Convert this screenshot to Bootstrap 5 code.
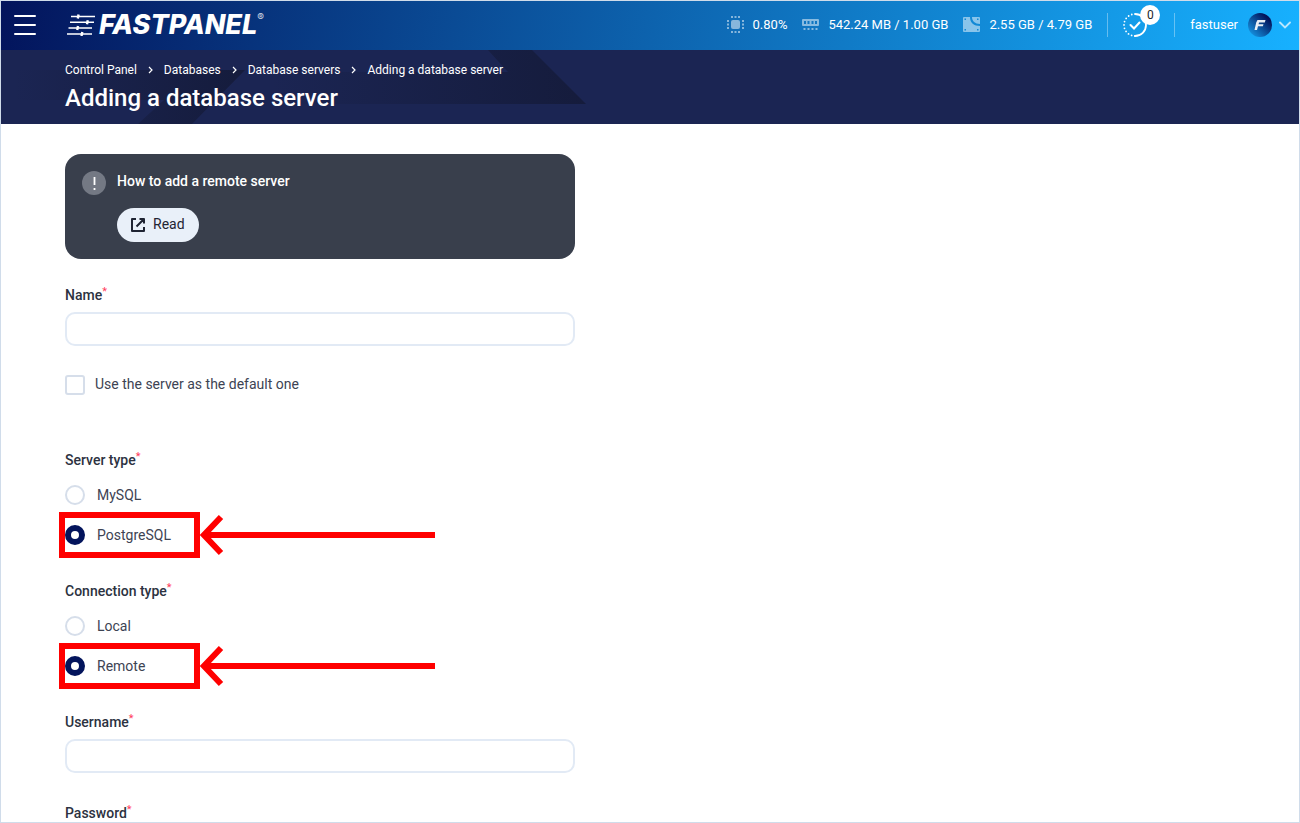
<!DOCTYPE html>
<html lang="en">
<head>
<meta charset="utf-8">
<meta name="viewport" content="width=device-width, initial-scale=1">
<title>Adding a database server</title>
<link href="https://cdn.jsdelivr.net/npm/bootstrap@5.3.0/dist/css/bootstrap.min.css" rel="stylesheet">
<style>
  body { font-family: Roboto, "Liberation Sans", sans-serif; font-size: 14px; line-height: 20px; color: #2c3241; }
  .app-frame { border: 1px solid #d0dcea; }
  .topbar { height: 49px; background: linear-gradient(100deg, #03145c 0%, #17b1ff 100%); font-size: 13px; padding: 0 8px 2px 13px; }
  .menu-btn, .plain-btn { background: none; border: 0; padding: 0; line-height: 0; }
  .brand { font-family: Inter, Roboto, sans-serif; font-size: 27px; line-height: 28px; font-weight: 800; font-style: italic; margin-left: 31px; }
  .brand sup { font-size: 10px; font-weight: 400; font-style: normal; line-height: 12px; top: 0; opacity: .8; }
  .stats { gap: 15px; }
  .stats svg { margin-right: 9px; }
  .sep { width: 1px; height: 24px; background: rgba(255,255,255,.35); margin: 0 15px; }
  .task-btn { margin-right: 12px; }
  .user-btn { gap: 10px; }
  .user-icons { gap: 7px; }
  .task-count { left: 17px; top: -8px; width: 20px; height: 20px; font-size: 12px; line-height: 20px; }
  .page-head { min-height: 74px; background: #1b2553; padding: 10px 64px 8px; }
  .page-head .art { inset: 0 auto auto 0; }
  .page-head .crumbs { font-size: 12px; gap: 10px; }
  .page-head h1 { font-size: 24px; line-height: 28px; font-weight: 500; margin: 4px 0 0; }
  .page-body { padding: 30px 64px; scrollbar-width: none; }
  .form-col { max-width: 510px; }
  .hint { background: #393f4c; border-radius: 16px; padding: 17px; gap: 11px; margin-bottom: 26px; }
  .hint-title { font-weight: 500; margin-bottom: 17px; }
  .read-btn { background: #e9f0f9; border-radius: 17px; height: 34px; padding: 0 14px; gap: 8px; color: #1f2433; font-size: 14px; }
  .read-btn span, .default-row label { padding-bottom: 2px; }
  .field-label { font-weight: 500; display: block; margin: 0 0 7px; font-size: 14px; line-height: 20px; }
  .req { color: #ff3b5c; font-size: 11px; font-weight: 400; line-height: 10px; vertical-align: 5px; }
  .form-control { height: 34px; border: 2px solid #e2eaf5; border-radius: 10px; }
  .field { margin-bottom: 30px; }
  .choice { gap: 10px; height: 20px; color: #3d4353; }
  .choice .form-check-input { width: 20px; height: 20px; margin: 0; border: 2px solid #d6deea; }
  .choice .form-check-input[type=checkbox] { border-radius: 3px; }
  .choice .form-check-input[type=radio]:checked { background: #fff none; border: 6px solid #03145c; }
  .choices { margin-bottom: 36px; }
  .choices .field-label { margin-bottom: 15px; }
  .choices .choice { gap: 12px; margin-bottom: 20px; }
  .default-row { margin: 29px 0 55px; }
  .mark-box { left: -6px; top: -13px; width: 141px; height: 46px; border: 6px solid #f00; pointer-events: none; }
  .mark-arrow { left: 135px; top: -11px; pointer-events: none; }
</style>
</head>
<body>
<div class="app-frame vh-100 d-flex flex-column overflow-hidden">
  <header class="topbar d-flex align-items-center text-white flex-shrink-0">
    <button class="menu-btn" type="button" aria-label="Menu">
      <svg width="22" height="20" viewBox="0 0 22 20" stroke="#fff" stroke-width="2" stroke-linecap="round"><path d="M1 1H21M1 10H21M1 19H21"/></svg>
    </button>
    <a href="#" class="brand d-flex align-items-center text-white text-decoration-none">
      <svg class="me-1" width="28" height="22" viewBox="0 0 28 22" stroke="#fff" stroke-width="1.6"><path d="M4 2.5H9M13 2.5H28M3 8.300H18M23 8.300H27M1.500 14H8M13 14H25M0 20H12M17 20H25"/><path d="M9 2.500H13M18 8.300H23M8 14H13M12 20H17"/><path stroke-width="2.400" d="M11.600 0.500L10.800 4.500M20.800 6.300L20 10.300M11 12L10.200 16M15.300 18L14.500 22"/></svg>
      <span>FASTPANEL</span><sup class="align-self-start">®</sup>
    </a>
    <div class="stats d-flex align-items-center ms-auto">
      <span class="d-flex align-items-center"><svg width="17" height="17" viewBox="0 0 17 17" fill="#fff" fill-opacity=".5"><rect x="4" y="4" width="9" height="9" rx="2"/><path d="M4 0h2v2H4zM7.500 0h2v2h-2zM11 0h2v2h-2zM4 15h2v2H4zM7.500 15h2v2h-2zM11 15h2v2h-2zM0 4h2v2H0zM0 7.500h2v2H0zM0 11h2v2H0zM15 4h2v2h-2zM15 7.500h2v2h-2zM15 11h2v2h-2z"/></svg>0.80%</span>
      <span class="d-flex align-items-center"><svg width="17" height="12" viewBox="0 0 17 12" fill="#fff" fill-opacity=".5"><path fill-rule="evenodd" d="M1 0H16Q17 0 17 1V6Q17 7 16 7H1Q0 7 0 6V1Q0 0 1 0ZM2 2V5H4V2ZM5.500 2V5H7.500V2ZM9.500 2V5H11.500V2ZM13 2V5H15V2Z"/><path d="M1.500 9h2v2h-2zM5.500 9h2v2h-2zM9.500 9h2v2h-2zM13.500 9h2v2h-2z"/></svg>542.24 MB / 1.00 GB</span>
      <span class="d-flex align-items-center"><svg width="17" height="15" viewBox="0 0 17 15" fill="#fff" fill-opacity=".5"><path fill-rule="evenodd" d="M1 0H7C7 6 11 9 17 9V14Q17 15 16 15H1Q0 15 0 14V1Q0 0 1 0ZM1.500 1.500V3H3V1.500ZM1.500 12V13.500H3V12ZM14 12V13.500H15.500V12Z"/><path fill-rule="evenodd" d="M9 0H16Q17 0 17 1V7C12 7 9 4 9 0ZM14 1.500V3H15.500V1.500Z"/></svg>2.55 GB / 4.79 GB</span>
    </div>
    <div class="sep"></div>
    <button class="plain-btn task-btn position-relative text-white" type="button" aria-label="Tasks">
      <svg width="24" height="24" viewBox="0 0 24 24" fill="none" stroke="#fff" stroke-width="1.800" stroke-linecap="round"><path d="M12 1A11 11 0 0 1 12 23"/><path stroke-dasharray="0 3.450" d="M12 23A11 11 0 0 1 12 1"/><path stroke-width="2" d="M7.500 12L11 15.500L16.500 9.500"/></svg>
      <span class="task-count position-absolute rounded-circle bg-white text-dark">0</span>
    </button>
    <div class="sep"></div>
    <button class="plain-btn user-btn text-white d-flex align-items-center" type="button">
      <span>fastuser</span>
      <span class="user-icons d-flex align-items-center">
      <svg width="24" height="24" viewBox="0 0 24 24"><defs><linearGradient id="av" x1="1" y1="0" x2="0" y2="1"><stop offset="0.200" stop-color="#03145c"/><stop offset="1" stop-color="#17a6f5"/></linearGradient></defs><circle cx="12" cy="12" r="12" fill="url(#av)"/><path d="M9.500 7H17.500L16.800 9.500H11L10.600 11.200H15.500L14.900 13.300H10L9 17H6.500L8.200 9.500Z" fill="#fff" fill-opacity=".9"/></svg>
      <svg width="12" height="8" viewBox="0 0 12 8" fill="none" stroke="#fff" stroke-opacity=".7" stroke-width="1.800" stroke-linecap="round"><path d="M1 1.500L6 6.500L11 1.500"/></svg>
      </span>
    </button>
  </header>

  <div class="page-head position-relative text-white flex-shrink-0 overflow-hidden">
    <svg class="art position-absolute" width="600" height="74" viewBox="0 0 600 74">
      <defs>
        <linearGradient id="fadeL"><stop offset="0" stop-color="#141a38" stop-opacity="0"/><stop offset="1" stop-color="#141a38" stop-opacity=".85"/></linearGradient>
        <linearGradient id="fadeTop"><stop offset="0" stop-color="#141a38" stop-opacity="0"/><stop offset="1" stop-color="#141a38" stop-opacity=".35"/></linearGradient>
      </defs>
      <path fill="url(#fadeL)" d="M12 20H244L191 74H137L163 50H12Z"/>
      <path fill="url(#fadeL)" d="M270 22H507L487 0H531L585 54H270Z"/>
    </svg>
    <nav class="crumbs position-relative d-flex align-items-center" aria-label="Breadcrumb">
      <a href="#" class="text-white text-decoration-none">Control Panel</a>
      <svg width="7" height="8" viewBox="0 0 7 8" fill="none" stroke="#fff" stroke-width="1.200"><path d="M2 1L5 4L2 7"/></svg>
      <a href="#" class="text-white text-decoration-none">Databases</a>
      <svg width="7" height="8" viewBox="0 0 7 8" fill="none" stroke="#fff" stroke-width="1.200"><path d="M2 1L5 4L2 7"/></svg>
      <a href="#" class="text-white text-decoration-none">Database servers</a>
      <svg width="7" height="8" viewBox="0 0 7 8" fill="none" stroke="#fff" stroke-width="1.200"><path d="M2 1L5 4L2 7"/></svg>
      <span>Adding a database server</span>
    </nav>
    <h1 class="position-relative">Adding a database server</h1>
  </div>

  <main class="page-body flex-grow-1 overflow-auto bg-white">
    <form class="form-col">
      <div class="hint d-flex align-items-start text-white">
        <svg class="flex-shrink-0" width="24" height="24" viewBox="0 0 24 24"><circle cx="12" cy="12" r="12" fill="#747984"/><path d="M12.500 6V14M12.500 17V19" stroke="#fff" stroke-width="1.800"/></svg>
        <div>
          <div class="hint-title">How to add a remote server</div>
          <button type="button" class="read-btn border-0 d-flex align-items-center">
            <svg width="14" height="14" viewBox="0 0 14 14" fill="none" stroke="#1f2433" stroke-width="2" stroke-linejoin="round"><path d="M5 1H1V13H13V9M8.500 1H13V5.500M13 1L5.500 8.500"/></svg><span>Read</span>
          </button>
        </div>
      </div>

      <label class="field-label" for="name">Name<span class="req">*</span></label>
      <input class="form-control" id="name" type="text">

      <div class="choice default-row d-flex align-items-center">
        <input class="form-check-input" type="checkbox" id="default">
        <label for="default">Use the server as the default one</label>
      </div>

      <div class="choices" role="radiogroup" aria-labelledby="server-type">
        <div class="field-label" id="server-type">Server type<span class="req">*</span></div>
        <div class="choice d-flex align-items-center">
          <input class="form-check-input" type="radio" name="server" id="mysql">
          <label for="mysql">MySQL</label>
        </div>
        <div class="choice d-flex align-items-center position-relative mb-0">
          <input class="form-check-input" type="radio" name="server" id="pgsql" checked>
          <label for="pgsql">PostgreSQL</label>
          <span class="mark-box position-absolute"></span>
          <svg class="mark-arrow position-absolute" width="236" height="42" viewBox="0 0 236 42" fill="none" stroke="#f00" stroke-width="6"><path d="M235 21H6M21 3L4 21L21 39"/></svg>
        </div>
      </div>

      <div class="choices" role="radiogroup" aria-labelledby="connection-type">
        <div class="field-label" id="connection-type">Connection type<span class="req">*</span></div>
        <div class="choice d-flex align-items-center">
          <input class="form-check-input" type="radio" name="connection" id="local">
          <label for="local">Local</label>
        </div>
        <div class="choice d-flex align-items-center position-relative mb-0">
          <input class="form-check-input" type="radio" name="connection" id="remote" checked>
          <label for="remote">Remote</label>
          <span class="mark-box position-absolute"></span>
          <svg class="mark-arrow position-absolute" width="236" height="42" viewBox="0 0 236 42" fill="none" stroke="#f00" stroke-width="6"><path d="M235 21H6M21 3L4 21L21 39"/></svg>
        </div>
      </div>

      <div class="field">
        <label class="field-label" for="username">Username<span class="req">*</span></label>
        <input class="form-control" id="username" type="text">
      </div>
      <div class="field">
        <label class="field-label" for="password">Password<span class="req">*</span></label>
        <input class="form-control" id="password" type="password">
      </div>
    </form>
  </main>
</div>
<script src="https://cdn.jsdelivr.net/npm/bootstrap@5.3.0/dist/js/bootstrap.bundle.min.js"></script>
</body>
</html>
